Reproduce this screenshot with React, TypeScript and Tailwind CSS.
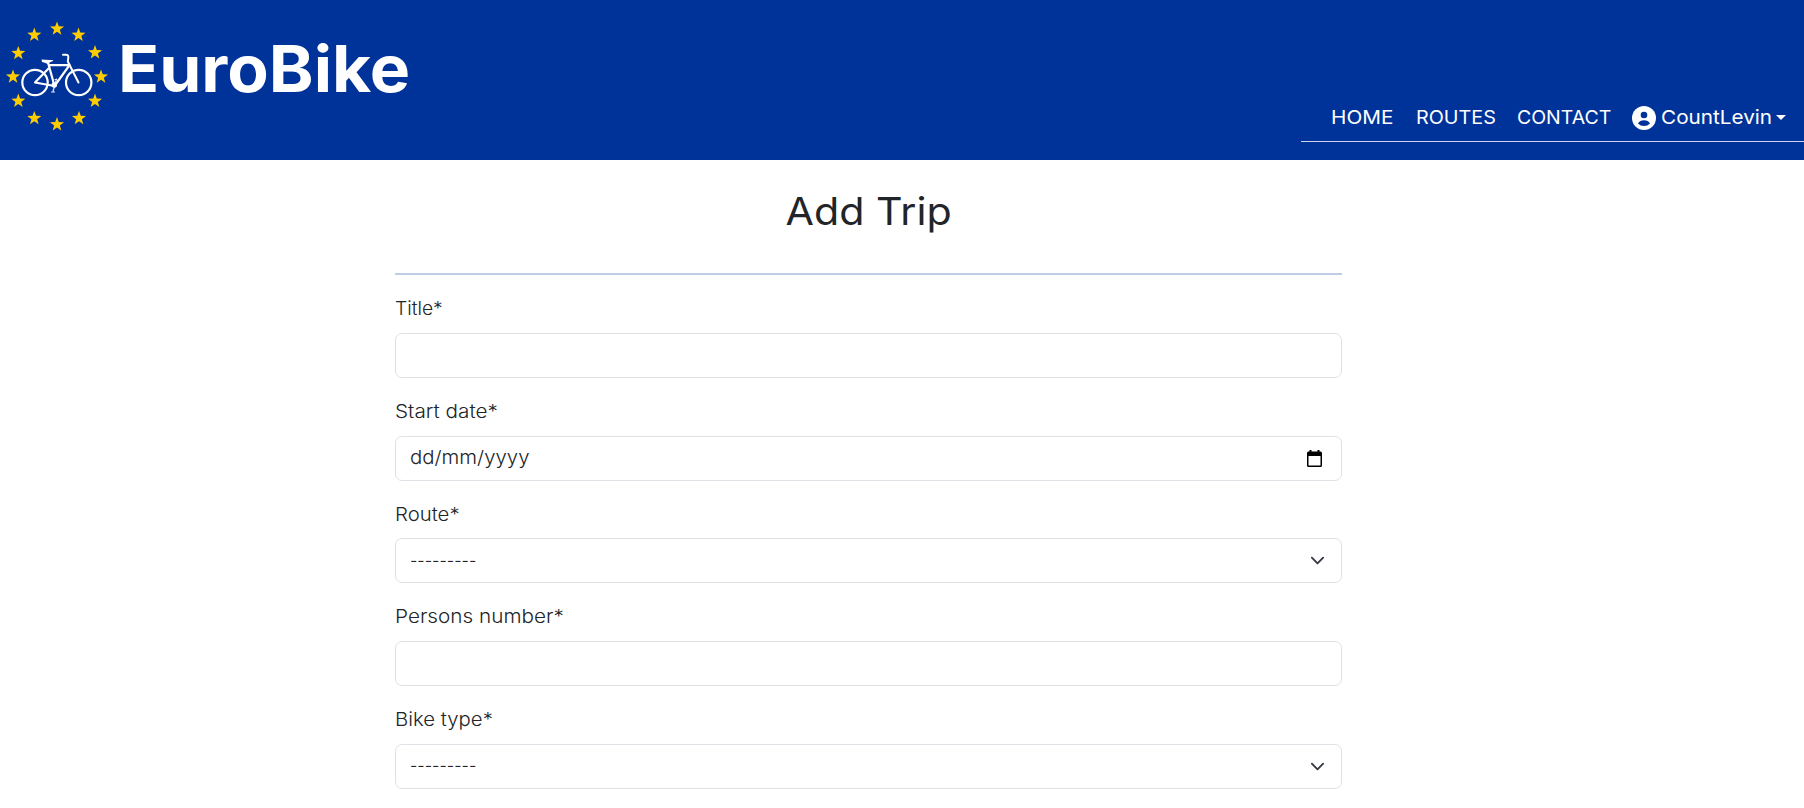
import type { ReactNode } from "react";

const stars: [number, number][] = [
  [57, 28.5], [78.5, 34.7], [95, 52.2], [101, 76.5], [95, 100.7], [79, 118],
  [57, 124.2], [34.3, 118], [18.3, 100.7], [13, 76.5], [18.3, 53], [34.3, 34.7],
];

function starPoints(cx: number, cy: number): string {
  return Array.from({ length: 10 }, (_, i) => {
    const r = i % 2 === 0 ? 7.4 : 3;
    const a = (i * Math.PI) / 5 - Math.PI / 2;
    return `${(cx + r * Math.cos(a)).toFixed(2)},${(cy + 0.3 + r * Math.sin(a)).toFixed(2)}`;
  }).join(" ");
}

function Logo() {
  return (
    <svg width="116" height="134" viewBox="0 0 116 134" className="block shrink-0" aria-hidden="true">
      {stars.map(([x, y]) => (
        <polygon key={`${x}-${y}`} points={starPoints(x, y)} fill="#ffcc00" />
      ))}
      <g fill="none" stroke="#fff" strokeWidth="2.2" strokeLinecap="round" strokeLinejoin="round">
        <circle cx="35" cy="82.5" r="12.7" />
        <circle cx="78.7" cy="82.5" r="12.7" />
        <path d="M48 62.5L54.5 86L35 82.5L49.5 67.5" />
        <path d="M50 65.2H69.5L54.5 86" />
        <path d="M78.5 82.5L67.8 61.5L68.3 57.5Q68.5 54.8 66 54.8H63" strokeWidth="2" />
        <path d="M56.5 79L53 91.5M51.5 92H54.5M55 79.5H57" strokeWidth="1.2" stroke="#dfe6f4" />
      </g>
      <path d="M41.5 59.600Q47 60.300 53.300 60Q53.300 61.600 50 62.300L47.500 64Q45 62.300 42 61.900Z" fill="#fff" />
      <circle cx="54.3" cy="85" r="2.7" fill="#fff" />
    </svg>
  );
}

function NavItem({ className, scale, children }: { className: string; scale: string; children: ReactNode }) {
  return (
    <a href="#" className={`block whitespace-nowrap ${className}`}>
      <span className={`inline-block origin-left ${scale}`}>{children}</span>
    </a>
  );
}

function Header() {
  return (
    <header className="flex h-40 justify-between bg-[#003399] text-white">
      <a href="#" className="flex">
        <Logo />
        <span className="mt-[29px] ml-[1.5px] inline-block h-20 origin-left scale-x-[1.049] text-[64.6px] leading-[80px] font-bold">
          EuroBike
        </span>
      </a>
      <nav className="mt-[94px] flex h-12 w-[503px] items-center border-b border-[#ccd6eb] pl-[30px] text-[19px] leading-[46px]">
        <NavItem className="w-[84.5px]" scale="scale-x-[1.09]">HOME</NavItem>
        <NavItem className="w-[101px]" scale="scale-x-[1.04]">ROUTES</NavItem>
        <NavItem className="w-[115.5px]" scale="scale-x-[1.025]">CONTACT</NavItem>
        <a href="#" className="flex items-center">
          <svg width="24" height="24" viewBox="0 0 24 24">
            <circle cx="12" cy="12" r="12" fill="#fff" />
            <circle cx="12" cy="9" r="3.3" fill="#003399" />
            <path d="M6 17.500Q7.800 14.300 12 14.300Q16.200 14.300 18 17.500Q15.500 20.100 12 20.100Q8.500 20.100 6 17.500Z" fill="#003399" />
          </svg>
          <span className="ml-[5px] inline-block w-[115px] origin-left scale-x-[1.09]">CountLevin</span>
          <svg width="10" height="5" viewBox="0 0 10 5" fill="currentColor">
            <path d="M0 0H10L5 5Z" />
          </svg>
        </a>
      </nav>
    </header>
  );
}

function Field({ label, scale, children }: { label: string; scale: string; children?: ReactNode }) {
  return (
    <div className="mb-[19px]">
      <label className="mb-[9.75px] block h-[29px] leading-[29px]">
        <span className={`inline-block origin-left ${scale}`}>{label}</span>
      </label>
      <div className="flex h-[45px] items-center justify-between rounded-[7px] border border-[#dee2e6] bg-white pl-[14px]">
        {children}
      </div>
    </div>
  );
}

function SelectValue() {
  return (
    <>
      <span className="inline-block origin-left scale-x-[0.88]">---------</span>
      <svg width="15" height="15" viewBox="0 0 16 16" fill="none" stroke="#343a40" strokeWidth="2" strokeLinecap="round" strokeLinejoin="round" className="mr-4">
        <path d="m2 5 6 6 6-6" />
      </svg>
    </>
  );
}

export default function App() {
  return (
    <div className="h-[808px] overflow-hidden bg-white font-['Inter',sans-serif] text-[#212529]">
      <Header />
      <main className="ml-[395px] w-[947px] pt-[27px]">
        <h1 className="text-center text-[38.5px] leading-[48px] font-normal">
          <span className="inline-block scale-x-[1.07]">Add Trip</span>
        </h1>
        <hr className="mt-[38px] mb-[19px] border-0 border-t-2 border-[#bfcce5]" />
        <form className="text-[18.5px] font-light">
          <Field label="Title*" scale="scale-x-[1.04]" />
          <Field label="Start date*" scale="scale-x-[1.12]">
            <span className="inline-block origin-left scale-x-[1.10]">dd/mm/yyyy</span>
            <svg width="15" height="17" viewBox="0 0 15 17" className="mr-[19px]">
              <path fillRule="evenodd" fill="#000" d="M2.500 0H4.500V1.500H10.500V0H12.500V1.500H13.500Q15 1.500 15 3V15.500Q15 17 13.500 17H1.500Q0 17 0 15.500V3Q0 1.500 1.500 1.500H2.500ZM1.500 6V15.500H13.500V6Z" />
            </svg>
          </Field>
          <Field label="Route*" scale="scale-x-[1.10]">
            <SelectValue />
          </Field>
          <Field label="Persons number*" scale="scale-x-[1.12]" />
          <Field label="Bike type*" scale="scale-x-[1.10]">
            <SelectValue />
          </Field>
        </form>
      </main>
    </div>
  );
}
